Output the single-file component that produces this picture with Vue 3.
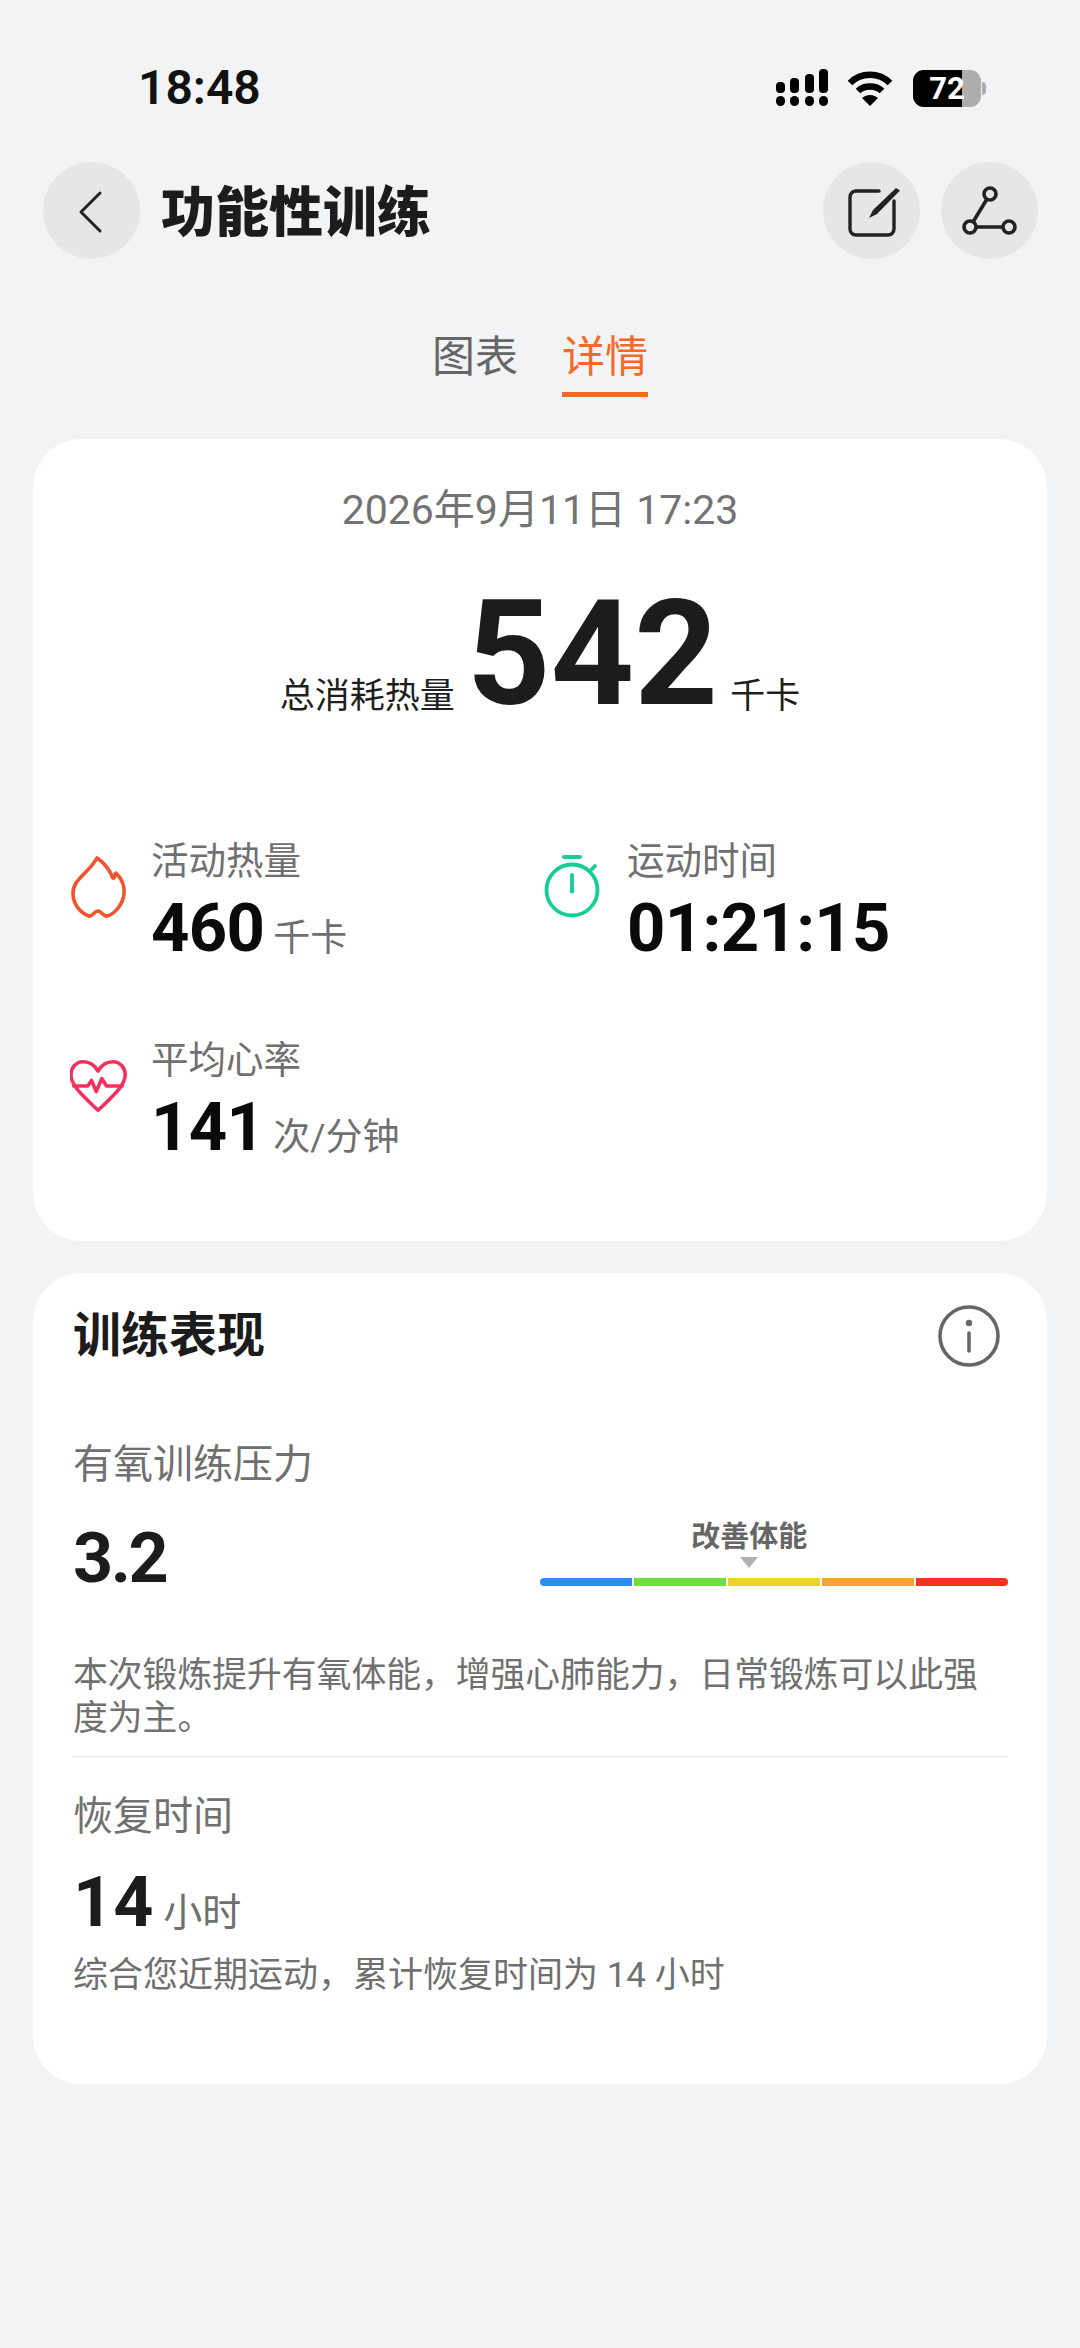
<template>
  <div class="page">
    <div class="status-bar">
      <span class="clock">18:48</span>
      <div class="status-icons">
        <svg class="signal" width="54" height="38" viewBox="0 0 54 38" fill="#000">
          <rect x="0" y="13" width="9" height="11" rx="4" />
          <rect x="14" y="9" width="9" height="15" rx="4" />
          <rect x="29" y="5" width="9" height="19" rx="4" />
          <rect x="43" y="0" width="9" height="24" rx="4" />
          <rect x="0" y="27" width="9" height="10" rx="4.5" />
          <rect x="14" y="27" width="9" height="10" rx="4.5" />
          <rect x="29" y="27" width="9" height="10" rx="4.5" />
          <rect x="43" y="27" width="9" height="10" rx="4.5" />
        </svg>
        <svg class="wifi" width="46" height="36" viewBox="0 0 46 36" fill="none" stroke="#000" stroke-width="6.5">
          <path d="M3 13 C14 2 32 2 43 13" />
          <path d="M11 21 C17 15 29 15 35 21" />
          <path d="M15 28 L23 36 L31 28 C26 24 20 24 15 28 Z" fill="#000" stroke="none" />
        </svg>
        <div class="battery">
          <div class="battery-body">
            <div class="battery-fill" :style="{ width: battery + '%' }"></div>
            <span class="battery-text">{{ battery }}</span>
          </div>
          <div class="battery-tip"></div>
        </div>
      </div>
    </div>

    <div class="nav-bar">
      <button class="round-btn">
        <svg width="40" height="48" viewBox="0 0 40 48" fill="none" stroke="#222" stroke-width="3" stroke-linecap="round" stroke-linejoin="round">
          <path d="M28 6 L9 25 L28 44" />
        </svg>
      </button>
      <h1 class="nav-title">功能性训练</h1>
      <button class="round-btn">
        <svg width="60" height="60" viewBox="1 0 60 60" fill="none" stroke="#222" stroke-width="3.4" stroke-linecap="round">
          <path d="M38 10 H15 a6 6 0 0 0 -6 6 V48 a6 6 0 0 0 6 6 H47 a6 6 0 0 0 6 -6 V20" />
          <path d="M55 7 L59 9.5 L36 33 L28 37 L32 29 Z" fill="#222" stroke="none" />
        </svg>
      </button>
      <button class="round-btn share-btn">
        <svg width="60" height="60" viewBox="1 0 60 60" fill="none" stroke="#222" stroke-width="3.6">
          <circle cx="31" cy="13" r="6" />
          <circle cx="11" cy="46" r="6" />
          <circle cx="50" cy="46" r="6" />
          <path d="M28 18 L14 41 M17 46 H44" />
        </svg>
      </button>
    </div>

    <div class="tabs">
      <div class="tab">图表</div>
      <div class="tab active">详情</div>
    </div>

    <section class="card summary">
      <div class="summary-date">2026年9月11日 17:23</div>
      <div class="total">
        <span class="total-label">总消耗热量</span>
        <span class="total-num">542</span>
        <span class="total-unit">千卡</span>
      </div>
      <div class="metrics">
        <div class="metric">
          <div class="metric-icon">
            <svg width="60" height="66" viewBox="0 0 60 66" fill="none" stroke="#f0522b" stroke-width="3.6" stroke-linejoin="round">
              <path d="M28 4 C31 6 37 11 41 18 C43 21 43 25 45 24 C46 22 46 19 47 19 C53 25 56 32 55 40 C54 50 46 60 38 62 C34 63 33 57 29 57 C25 57 24 63 20 62 C11 59 4 50 4 39 C4 25 20 19 28 4 Z" />
            </svg>
          </div>
          <div>
            <div class="metric-label">活动热量</div>
            <div class="metric-value">460<span class="unit">千卡</span></div>
          </div>
        </div>
        <div class="metric">
          <div class="metric-icon timer-icon">
            <svg width="60" height="66" viewBox="0 0 60 66" fill="none" stroke="#14cf95" stroke-width="3.8" stroke-linecap="round">
              <path d="M21 3 H37" stroke-width="4" />
              <circle cx="29" cy="36" r="25.5" />
              <path d="M29 21 V37" />
              <circle cx="29" cy="37" r="2.4" fill="#14cf95" stroke="none" />
              <path d="M47 17 L52 12" />
            </svg>
          </div>
          <div>
            <div class="metric-label">运动时间</div>
            <div class="metric-value">01:21:15</div>
          </div>
        </div>
        <div class="metric">
          <div class="metric-icon">
            <svg width="58" height="58" viewBox="1 0 62 58" fill="none" stroke="#f5305f" stroke-width="3.8" stroke-linejoin="round" stroke-linecap="round">
              <path d="M31 13 C27 6 21 3 15 3 C7 3 2 10 2 17 C2 27 10 35 31 55 C52 35 60 27 60 17 C60 10 55 3 47 3 C41 3 35 6 31 13 Z" />
              <path d="M5 29 H20 L24 23 L29 35 L35 21 L40 29 H57" />
            </svg>
          </div>
          <div>
            <div class="metric-label">平均心率</div>
            <div class="metric-value">141<span class="unit">次/分钟</span></div>
          </div>
        </div>
      </div>
    </section>

    <section class="card perf">
      <div class="perf-head">
        <h2 class="perf-title">训练表现</h2>
        <svg width="62" height="62" viewBox="0 0 62 62" fill="none" stroke="#666" stroke-width="3.6" stroke-linecap="round">
          <circle cx="31" cy="31" r="29" />
          <circle cx="31" cy="18" r="3.2" fill="#666" stroke="none" />
          <path d="M31 28 V46" />
        </svg>
      </div>

      <div class="perf-label">有氧训练压力</div>
      <div class="load-row">
        <span class="load-num">3.2</span>
        <div class="gauge">
          <div class="gauge-tag" :style="{ left: markerPos + '%' }">
            <span>改善体能</span>
            <i class="gauge-arrow"></i>
          </div>
          <div class="gauge-bar">
            <div v-for="c in zones" :key="c" class="zone" :style="{ background: c }"></div>
          </div>
        </div>
      </div>
      <p class="perf-desc">本次锻炼提升有氧体能，增强心肺能力，日常锻炼可以此强度为主。</p>
      <div class="divider"></div>

      <div class="perf-label recover-label">恢复时间</div>
      <div class="recover-value">14<span class="recover-unit">小时</span></div>
      <p class="recover-desc">综合您近期运动，累计恢复时间为 14 小时</p>
    </section>
  </div>
</template>

<script setup>
const battery = 72
const markerPos = 44.7
const zones = ['#2a8cff', '#6fdf3c', '#ecd61c', '#f8a623', '#fb3022']
</script>

<style>
html, body {
  margin: 0;
  background: #f2f3f5;
}
</style>

<style scoped>
.page {
  width: 1080px;
  height: 2348px;
  overflow: hidden;
  background: #f2f3f5;
  font-family: Roboto, "Noto Sans CJK SC", sans-serif;
  color: #1a1a1a;
}

.status-bar {
  display: flex;
  justify-content: space-between;
  align-items: center;
  height: 38px;
  padding: 69px 94px 0 138px;
}

.clock {
  font-size: 48px;
  font-weight: 600;
  line-height: 38px;
  color: #111;
}

.status-icons {
  display: flex;
  align-items: center;
}

.wifi {
  margin-left: 17px;
}

.battery {
  display: flex;
  align-items: center;
  margin-left: 20px;
}

.battery-body {
  position: relative;
  width: 68px;
  height: 37px;
  border-radius: 11px;
  overflow: hidden;
  background: #aeaeae;
}

.battery-fill {
  height: 100%;
  background: #000;
}

.battery-text {
  position: absolute;
  inset: 0;
  text-align: center;
  font-size: 31px;
  font-weight: 700;
  line-height: 37px;
  color: #fff;
}

.battery-tip {
  width: 4px;
  height: 13px;
  margin-left: 1px;
  border-radius: 0 4px 4px 0;
  background: #aeaeae;
}

.nav-bar {
  display: flex;
  align-items: center;
  padding: 55px 42px 0 43px;
}

.round-btn {
  display: flex;
  align-items: center;
  justify-content: center;
  width: 97px;
  height: 97px;
  padding: 0;
  border: none;
  border-radius: 50%;
  background: #e5e6e8;
}

.share-btn {
  margin-left: 21px;
}

.nav-title {
  flex: 1;
  margin: 6px 0 0 21px;
  font-size: 54px;
  font-weight: 900;
  line-height: 91px;
  color: #1c1c1c;
}

.tabs {
  display: flex;
  justify-content: center;
  gap: 44px;
  margin-top: 68px;
}

.tab {
  width: 86px;
  height: 70px;
  font-size: 43px;
  line-height: 60px;
  text-align: center;
  color: #666;
}

.tab.active {
  color: #f26a25;
  border-bottom: 5px solid #f26a25;
  box-sizing: border-box;
}

.card {
  margin: 0 33px;
  box-sizing: border-box;
  border-radius: 48px;
  background: #fff;
}

.summary {
  height: 802px;
  margin-top: 42px;
  padding-top: 44px;
}

.summary-date {
  font-size: 41px;
  line-height: 54px;
  text-align: center;
  color: #737373;
}

.total {
  display: flex;
  justify-content: center;
  align-items: flex-end;
  height: 170px;
  margin-top: 33px;
}

.total-label,
.total-unit {
  margin-bottom: 18px;
  font-size: 35px;
  line-height: 50px;
  color: #1f1f1f;
}

.total-num {
  margin: 0 12px;
  font-size: 146px;
  font-weight: 700;
  line-height: 170px;
  color: #1c1c1c;
}

.metrics {
  display: grid;
  grid-template-columns: 474px 1fr;
  row-gap: 41px;
  margin-top: 81px;
  padding-left: 35px;
}

.metric {
  display: flex;
  align-items: center;
  height: 158px;
}

.metric-icon {
  display: flex;
  justify-content: center;
  width: 62px;
  margin-right: 21px;
  padding-bottom: 26px;
}

.timer-icon {
  margin-right: 23px;
}

.metric-label {
  font-size: 37.5px;
  line-height: 50px;
  color: #707070;
}

.metric-value {
  margin-top: 5px;
  font-size: 67px;
  font-weight: 700;
  line-height: 74px;
  letter-spacing: -0.7px;
  color: #0a0a0a;
}

.unit {
  margin-left: 9px;
  font-size: 37px;
  font-weight: 400;
  line-height: 1;
  letter-spacing: 0;
  color: #6f6f6f;
}

.perf {
  height: 811px;
  margin-top: 32px;
  padding: 32px 39px 0 40px;
}

.perf-head {
  display: flex;
  justify-content: space-between;
  align-items: center;
  padding-right: 8px;
}

.perf-title {
  margin: 0;
  font-size: 48px;
  font-weight: 700;
  line-height: 62px;
  color: #1c1c1c;
}

.perf-label {
  margin-top: 68px;
  font-size: 40px;
  line-height: 60px;
  color: #707070;
}

.load-row {
  display: flex;
  justify-content: space-between;
  align-items: flex-end;
  margin-top: 23px;
}

.load-num {
  font-size: 70px;
  font-weight: 700;
  line-height: 80px;
  letter-spacing: -2.5px;
  color: #1c1c1c;
}

.gauge {
  position: relative;
  width: 468px;
  margin-bottom: 12px;
}

.gauge-tag {
  position: absolute;
  bottom: 18px;
  display: flex;
  flex-direction: column;
  align-items: center;
  transform: translateX(-50%);
  font-size: 29px;
  font-weight: 700;
  line-height: 36px;
  white-space: nowrap;
  color: #666;
}

.gauge-arrow {
  width: 0;
  height: 0;
  margin-top: 2px;
  border-left: 9px solid transparent;
  border-right: 9px solid transparent;
  border-top: 11px solid #b0b0b0;
}

.gauge-bar {
  display: flex;
  gap: 2.5px;
  height: 8px;
  border-radius: 4px;
  overflow: hidden;
}

.zone {
  flex: 1;
}

.perf-desc {
  margin: 56px 0 0;
  font-size: 34.8px;
  line-height: 43px;
  color: #707070;
}

.divider {
  height: 1px;
  margin-top: 16px;
  background: #e8e8e8;
}

.recover-label {
  margin-top: 30px;
}

.recover-value {
  margin-top: 17px;
  font-size: 70px;
  font-weight: 700;
  line-height: 76px;
  color: #1c1c1c;
}

.recover-unit {
  margin-left: 10px;
  font-size: 39px;
  font-weight: 400;
  line-height: 1;
  color: #6f6f6f;
}

.recover-desc {
  margin: 11px 0 0;
  font-size: 35px;
  line-height: 50px;
  color: #707070;
}
</style>
